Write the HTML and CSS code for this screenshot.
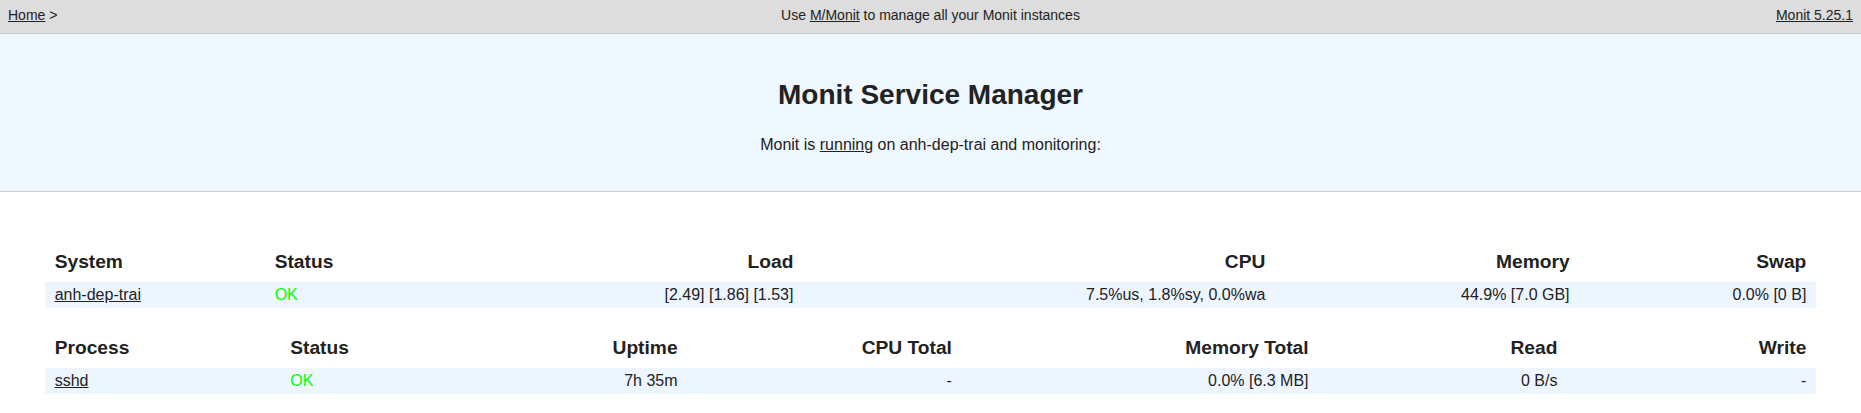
FILE: index.html
```html
<!DOCTYPE html>
<html>
<head>
<meta charset="utf-8">
<title>Monit: anh-dep-trai</title>
<link rel="stylesheet" href="styles.css">
</head>
<body>
<div class="nav">
  <div class="nav-left"><a href="#">Home</a>&nbsp;&gt;&nbsp;</div>
  <div class="nav-center">Use <a href="#">M/Monit</a> to manage all your Monit instances</div>
  <div class="nav-right"><a href="#">Monit 5.25.1</a></div>
</div>
<div class="header">
  <h1 class="title">Monit Service Manager</h1>
  <p class="subtitle">Monit is <a href="#">running</a> on anh-dep-trai and monitoring:</p>
</div>
<div class="main">
  <table class="status-table">
    <tr>
      <th class="left first">System</th>
      <th class="left">Status</th>
      <th class="right column">Load</th>
      <th class="right column">CPU</th>
      <th class="right column">Memory</th>
      <th class="right column">Swap</th>
    </tr>
    <tr class="stripe">
      <td class="left"><a href="#">anh-dep-trai</a></td>
      <td class="left"><span class="green-text">OK</span></td>
      <td class="right column">[2.49]&nbsp;[1.86]&nbsp;[1.53]</td>
      <td class="right column">7.5%us,&nbsp;1.8%sy,&nbsp;0.0%wa</td>
      <td class="right column">44.9% [7.0&nbsp;GB]</td>
      <td class="right column">0.0% [0&nbsp;B]</td>
    </tr>
  </table>
  <table class="status-table">
    <tr>
      <th class="left">Process</th>
      <th class="left">Status</th>
      <th class="right">Uptime</th>
      <th class="right">CPU Total</th>
      <th class="right">Memory Total</th>
      <th class="right column">Read</th>
      <th class="right column">Write</th>
    </tr>
    <tr class="stripe">
      <td class="left"><a href="#">sshd</a></td>
      <td class="left"><span class="green-text">OK</span></td>
      <td class="right">7h 35m</td>
      <td class="right">-</td>
      <td class="right">0.0% [6.3&nbsp;MB]</td>
      <td class="right column">0&nbsp;B/s</td>
      <td class="right column">-</td>
    </tr>
  </table>
</div>
</body>
</html>
```
FILE: styles.css
```css
html, body {
  margin: 0;
}
body {
  background: #fff;
  font: normal normal normal 16px/20px "Liberation Sans", Arial, Helvetica, sans-serif;
  color: #222;
}
a {
  color: #222;
  text-decoration: underline;
}
.nav {
  display: flex;
  box-sizing: border-box;
  height: 34px;
  padding: 7px 8px 0;
  background: #ddd;
  border-bottom: 1px solid #ccc;
  font-size: 14px;
  line-height: 16px;
}
.nav-left {
  flex: 0 0 20%;
}
.nav-center {
  flex: 1 1 auto;
  text-align: center;
}
.nav-right {
  flex: 0 0 20%;
  text-align: right;
}
.header {
  background: #EFF7FF;
  border-bottom: 1px solid #ccc;
  padding: 51px 0 36px;
  text-align: center;
  margin-bottom: 30px;
}
.title {
  margin: 0;
  font-size: 28px;
  line-height: 20px;
  font-weight: bold;
  color: #222;
}
.subtitle {
  margin: 30px 0 0;
}
.status-table {
  width: 95.2%;
  margin: 0 auto;
  border-collapse: collapse;
  border: 0;
}
.status-table th {
  padding: 30px 10px 10px 10px;
  font-size: 120%;
  font-weight: bold;
}
.status-table td {
  padding: 3px 10px;
}
.first {
  min-width: 200px;
  width: 200px;
  white-space: nowrap;
}
.column {
  min-width: 80px;
}
.left {
  text-align: left;
}
.right {
  text-align: right;
}
.stripe {
  background: #EDF5FF;
}
.green-text {
  color: #00ff00;
}
```
